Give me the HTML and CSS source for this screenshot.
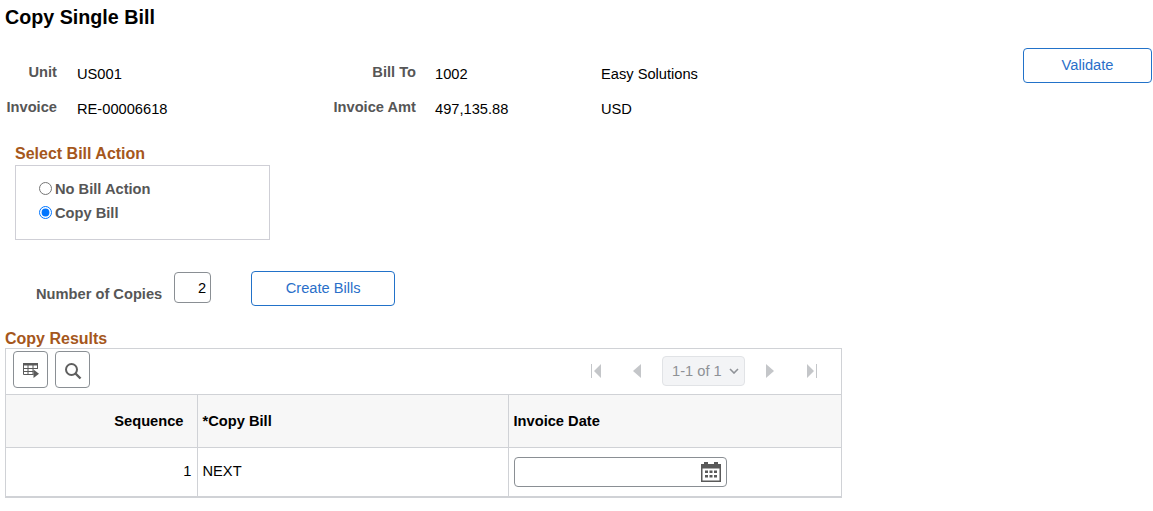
FILE: index.html
```html
<!DOCTYPE html>
<html lang="en">
<head>
<meta charset="utf-8">
<title>Copy Single Bill</title>
<link rel="stylesheet" href="styles.css">
</head>
<body>
<h1 class="page-title">Copy Single Bill</h1>

<section class="summary">
  <div class="summary-grid">
    <span class="label">Unit</span><span class="value">US001</span>
    <span class="label">Bill To</span><span class="value">1002</span><span class="value">Easy Solutions</span>
    <span class="label">Invoice</span><span class="value">RE-00006618</span>
    <span class="label">Invoice Amt</span><span class="value">497,135.88</span><span class="value">USD</span>
  </div>
  <button class="btn btn-validate" type="button">Validate</button>
</section>

<section class="action">
  <h2 class="section-title">Select Bill Action</h2>
  <div class="action-box">
    <label class="radio"><input type="radio" name="action"><span>No Bill Action</span></label>
    <label class="radio"><input type="radio" name="action" checked><span>Copy Bill</span></label>
  </div>
</section>

<section class="copies">
  <span class="label copies-label">Number of Copies</span>
  <input class="copies-input" type="text" value="2">
  <button class="btn btn-create" type="button">Create Bills</button>
</section>

<section class="results">
  <h2 class="section-title">Copy Results</h2>
  <div class="grid">
    <div class="toolbar">
      <button class="tool" type="button" aria-label="Personalize">
        <svg class="icon-table" width="16" height="15" viewBox="0 0 16 15"><path d="M0 0h15v2.500H0z" fill="#5a5a5a"/><path d="M.5 2v9.500h10M14.500 2v4M.5 5.500h14M.5 8.500h10M5 2v9.500M10 2v9.500" fill="none" stroke="#5a5a5a" stroke-width="1"/><path d="M10.500 6.500l5.500 4.250-5.500 4.250z" fill="#5a5a5a"/></svg>
      </button>
      <button class="tool" type="button" aria-label="Find">
        <svg class="icon-find" width="18" height="18" viewBox="0 0 18 18"><circle cx="7.500" cy="7.500" r="5.500" fill="none" stroke="#5f5f5f" stroke-width="2"/><path d="M11.500 11.500l5 5" stroke="#5f5f5f" stroke-width="2.400" fill="none"/></svg>
      </button>
      <div class="pager">
        <svg class="pg pg-first" width="12" height="14" viewBox="0 0 12 14"><path d="M1 0h1v14H1zM11 0v14L4 7z" fill="#c4c6c9"/></svg>
        <svg class="pg pg-prev" width="8" height="14" viewBox="0 0 8 14"><path d="M8 0v14L0 7z" fill="#c4c6c9"/></svg>
        <div class="pg-select"><span>1-1 of 1</span><svg width="10" height="6" viewBox="0 0 10 6"><path d="M1 1l4 4 4-4" fill="none" stroke="#8f9297" stroke-width="1.600"/></svg></div>
        <svg class="pg pg-next" width="8" height="14" viewBox="0 0 8 14"><path d="M0 0v14l8-7z" fill="#c4c6c9"/></svg>
        <svg class="pg pg-last" width="12" height="14" viewBox="0 0 12 14"><path d="M1 0v14l7-7zM10 0h1v14h-1z" fill="#c4c6c9"/></svg>
      </div>
    </div>
    <table class="data">
      <thead>
        <tr><th class="col-seq">Sequence</th><th class="col-bill">*Copy Bill</th><th class="col-date">Invoice Date</th></tr>
      </thead>
      <tbody>
        <tr>
          <td class="col-seq cell-text">1</td>
          <td class="col-bill cell-text">NEXT</td>
          <td class="col-date">
            <div class="date-input">
              <svg width="20" height="20" viewBox="0 0 20 20"><path d="M0 2h3V0h4v2h6V0h4v2h3v18H0zM1.500 6.500v12h17v-12z" fill="#5a5a5a"/><path d="M4 8.500h3v2.500H4zM8.500 8.500h3v2.500h-3zM13 8.500h3v2.500h-3zM4 13h3v2.500H4zM8.500 13h3v2.500h-3zM13 13h3v2.500h-3z" fill="#5a5a5a"/></svg>
            </div>
          </td>
        </tr>
      </tbody>
    </table>
  </div>
</section>
</body>
</html>
```
FILE: styles.css
```css
* { box-sizing: border-box; }
html, body { margin: 0; padding: 0; background: #fff; }
body {
  font-family: "Liberation Sans", Arial, sans-serif;
  font-size: 14.67px;
  color: #000;
  height: 511px;
  overflow: hidden;
}
.page-title {
  margin: 0;
  padding: 7px 0 0 5px;
  font-size: 19.7px;
  line-height: 21px;
  font-weight: bold;
  color: #000;
}
.summary {
  display: flex;
  justify-content: space-between;
  align-items: flex-start;
  padding: 20px 1px 0 0;
}
.summary-grid {
  display: grid;
  grid-template-columns: 57px 276px 83px 185px auto;
  grid-auto-rows: 35px;
  margin-top: 16px;
}
.label {
  font-weight: bold;
  color: #565656;
  text-align: right;
  line-height: 16px;
}
.value {
  line-height: 16px;
  padding-top: 2px;
  padding-left: 20px;
}
.summary-grid .label:nth-child(n) + .value + .label + .value { padding-left: 19px; }
.summary-grid .value + .value { padding-left: 0; }
.btn {
  font: 14.67px "Liberation Sans", Arial, sans-serif;
  color: #2a6fc9;
  background: #fff;
  border: 1px solid #2272c9;
  border-radius: 4px;
  padding: 0;
  height: 35px;
}
.btn-validate { width: 129px; padding-bottom: 2px; }
.action { padding: 0 0 0 15px; margin-top: 11px; }
.section-title {
  margin: 0;
  font-size: 16px;
  line-height: 17px;
  font-weight: bold;
  color: #a5571c;
}
.action-box {
  width: 255px;
  height: 75px;
  margin-top: 3px;
  padding: 15px 0 0 23px;
  border: 1px solid #cfcfd6;
  display: flex;
  flex-direction: column;
  gap: 8px;
}
.radio {
  display: flex;
  align-items: center;
  gap: 3px;
  font-weight: bold;
  color: #565656;
  line-height: 16px;
}
.radio input { margin: 0; width: 13px; height: 13px; position: relative; top: -1px; }
.copies {
  display: flex;
  align-items: flex-start;
  padding-left: 36px;
  margin-top: 31px;
}
.copies-label { padding-top: 15px; line-height: 16px; }
.copies-input {
  width: 37px;
  height: 31px;
  margin: 1px 0 0 12px;
  padding: 0 4px 0 0;
  border: 1px solid #8a8f94;
  border-radius: 4px;
  text-align: right;
  font: 14.67px "Liberation Sans", Arial, sans-serif;
  color: #000;
}
.btn-create { width: 144px; margin-left: 40px; padding-bottom: 2px; }
.results { padding-left: 5px; margin-top: 24px; }
.results .section-title { line-height: 18px; }
.grid {
  width: 837px;
  border: 1px solid #d0d2d6;
  border-bottom-width: 2px;
}
.toolbar {
  height: 46px;
  display: flex;
  align-items: flex-start;
  gap: 7px;
  padding: 2px 0 0 7px;
  border-bottom: 1px solid #d0d2d6;
}
.tool {
  width: 35px;
  height: 37px;
  padding: 0;
  border: 1px solid #8a8f94;
  border-radius: 4px;
  background: #fff;
  display: flex;
  align-items: center;
  justify-content: center;
}
.icon-table { margin: 2px 0 0 1px; }
.icon-find { margin-top: 3px; }
.pager {
  margin-left: auto;
  display: flex;
  align-items: center;
  padding: 5px 23px 0 0;
}
.pg-first { margin-right: 31px; }
.pg-prev { margin-right: 21px; }
.pg-select {
  width: 83px;
  height: 30px;
  margin-right: 21px;
  padding: 0 5px 0 9px;
  display: flex;
  align-items: center;
  justify-content: space-between;
  background: #f3f4f6;
  border: 1px solid #e1e3e6;
  border-radius: 4px;
  color: #8e9196;
}
.pg-next { margin-right: 32px; }
.data {
  width: 100%;
  border-collapse: collapse;
  table-layout: fixed;
}
.data th {
  height: 52px;
  background: #f7f7f7;
  font-size: 14.67px;
  font-weight: bold;
  padding: 0 5px;
  text-align: left;
  border-bottom: 1px solid #d0d2d6;
  border-right: 1px solid #d0d2d6;
}
.data td {
  height: 49px;
  padding: 0 5px;
  border-right: 1px solid #d0d2d6;
}
.data td.cell-text { padding-bottom: 2px; }
.data th:last-child, .data td:last-child { border-right: 0; }
.data .col-seq { width: 191px; text-align: right; }
.data th.col-seq { padding-right: 13px; }
.data .col-bill { width: 311px; }
.date-input {
  width: 213px;
  height: 30px;
  margin-top: 1px;
  border: 1px solid #8a8f94;
  border-radius: 4px;
  display: flex;
  align-items: center;
  justify-content: flex-end;
  padding-right: 5px;
}
```
